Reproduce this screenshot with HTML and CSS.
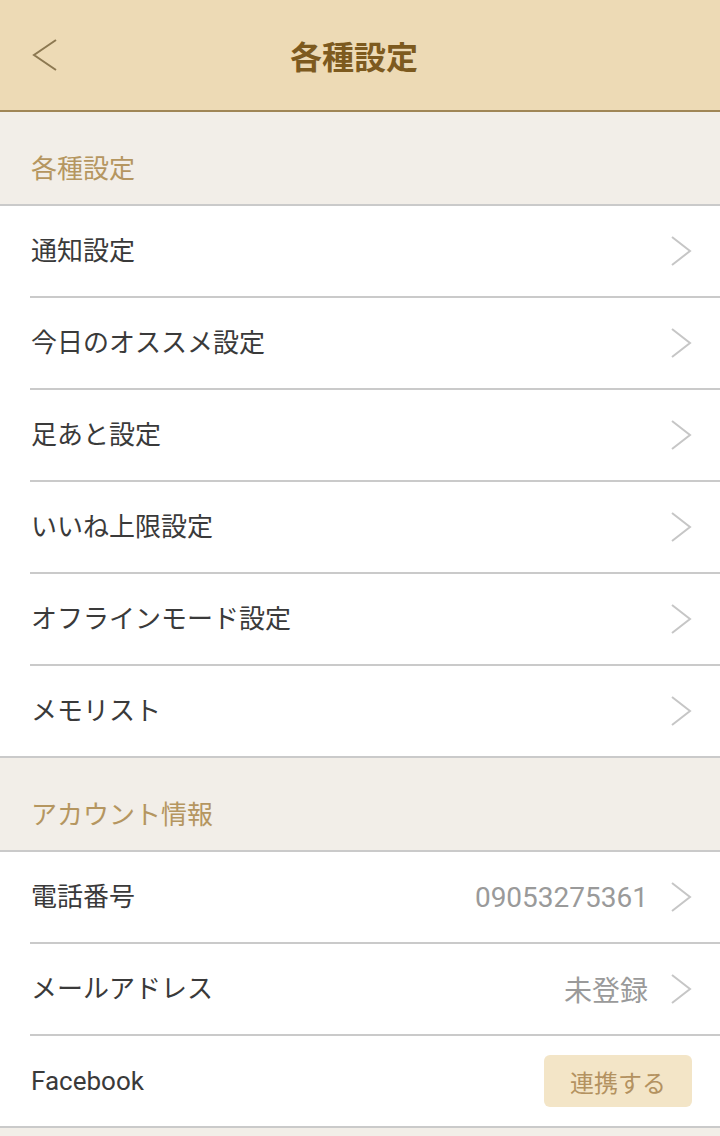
FILE: index.html
```html
<!DOCTYPE html>
<html lang="ja">
<head>
    <meta charset="utf-8">
    <title>各種設定</title>
    <link rel="stylesheet" href="styles.css">
</head>
<body>
    <!-- Cabeçalho -->
    <header class="topbar">
        <a class="back" href="#">
            <svg width="28" height="34" viewBox="0 0 28 34"><path d="M25 2 L3 17 L25 32" fill="none" stroke="#8c7851" stroke-width="2"/></svg>
        </a>
        <h1 class="title">各種設定</h1>
        <span></span>
    </header>

    <!-- 各種設定 -->
    <div class="section-title">各種設定</div>
    <ul class="list">
        <li class="row"><span class="label">通知設定</span><span class="chev"></span></li>
        <li class="row"><span class="label">今日のオススメ設定</span><span class="chev"></span></li>
        <li class="row"><span class="label">足あと設定</span><span class="chev"></span></li>
        <li class="row"><span class="label">いいね上限設定</span><span class="chev"></span></li>
        <li class="row"><span class="label">オフラインモード設定</span><span class="chev"></span></li>
        <li class="row"><span class="label">メモリスト</span><span class="chev"></span></li>
    </ul>

    <!-- アカウント情報 -->
    <div class="section-title">アカウント情報</div>
    <ul class="list">
        <li class="row"><span class="label">電話番号</span><span class="value">09053275361</span><span class="chev"></span></li>
        <li class="row"><span class="label">メールアドレス</span><span class="value">未登録</span><span class="chev"></span></li>
        <li class="row"><span class="label">Facebook</span><button class="link-btn">連携する</button></li>
    </ul>

    <script>
        // Chevrons
        const chevron = '<svg width="22" height="32" viewBox="0 0 22 32"><path d="M2 2 L20 16 L2 30" fill="none" stroke="#c6c6c6" stroke-width="2"/></svg>';
        document.querySelectorAll('.chev').forEach(el => el.innerHTML = chevron);
    </script>
</body>
</html>
```

FILE: styles.css
```css
/* Geral */
* {
    margin: 0;
    padding: 0;
    box-sizing: border-box;
}

body {
    background-color: #f2eee8;
    font-family: Roboto, "Noto Sans CJK JP", sans-serif;
    color: #3a3a3a;
}

/* Cabeçalho */
.topbar {
    display: grid;
    grid-template-columns: 1fr auto 1fr;
    align-items: center;
    height: 112px;
    padding-right: 12px;
    background-color: #eddab5;
    border-bottom: 2px solid #a08656;
}

.back {
    display: flex;
    padding-left: 31px;
}

.title {
    font-family: "Noto Sans CJK JP", sans-serif;
    font-size: 32px;
    font-weight: 700;
    color: #7d5a1f;
    line-height: 40px;
}

/* Seções */
.section-title {
    padding: 43px 31px 25px;
    height: 92px;
    font-size: 26px;
    line-height: 24px;
    color: #b59660;
    font-family: "Noto Sans CJK JP", sans-serif;
}

.list {
    list-style: none;
    background-color: #fff;
    border-top: 2px solid #cacaca;
    border-bottom: 2px solid #cacaca;
    padding-left: 30px;
}

.row {
    display: flex;
    align-items: center;
    height: 92px;
    padding-right: 28px;
    border-bottom: 2px solid #cacaca;
}

.row:last-child {
    height: 90px;
    border-bottom: none;
}

.label {
    flex: 1;
    font-size: 26px;
    line-height: 30px;
    padding-left: 1px;
    margin-top: -1px;
}

.value {
    font-size: 28px;
    color: #9a9a9a;
    margin-right: 22px;
}

.chev {
    display: flex;
}

.link-btn {
    width: 148px;
    height: 52px;
    border: none;
    border-radius: 6px;
    background-color: #f3e5c7;
    color: #b39260;
    font-family: "Noto Sans CJK JP", sans-serif;
    font-size: 24px;
}
```
